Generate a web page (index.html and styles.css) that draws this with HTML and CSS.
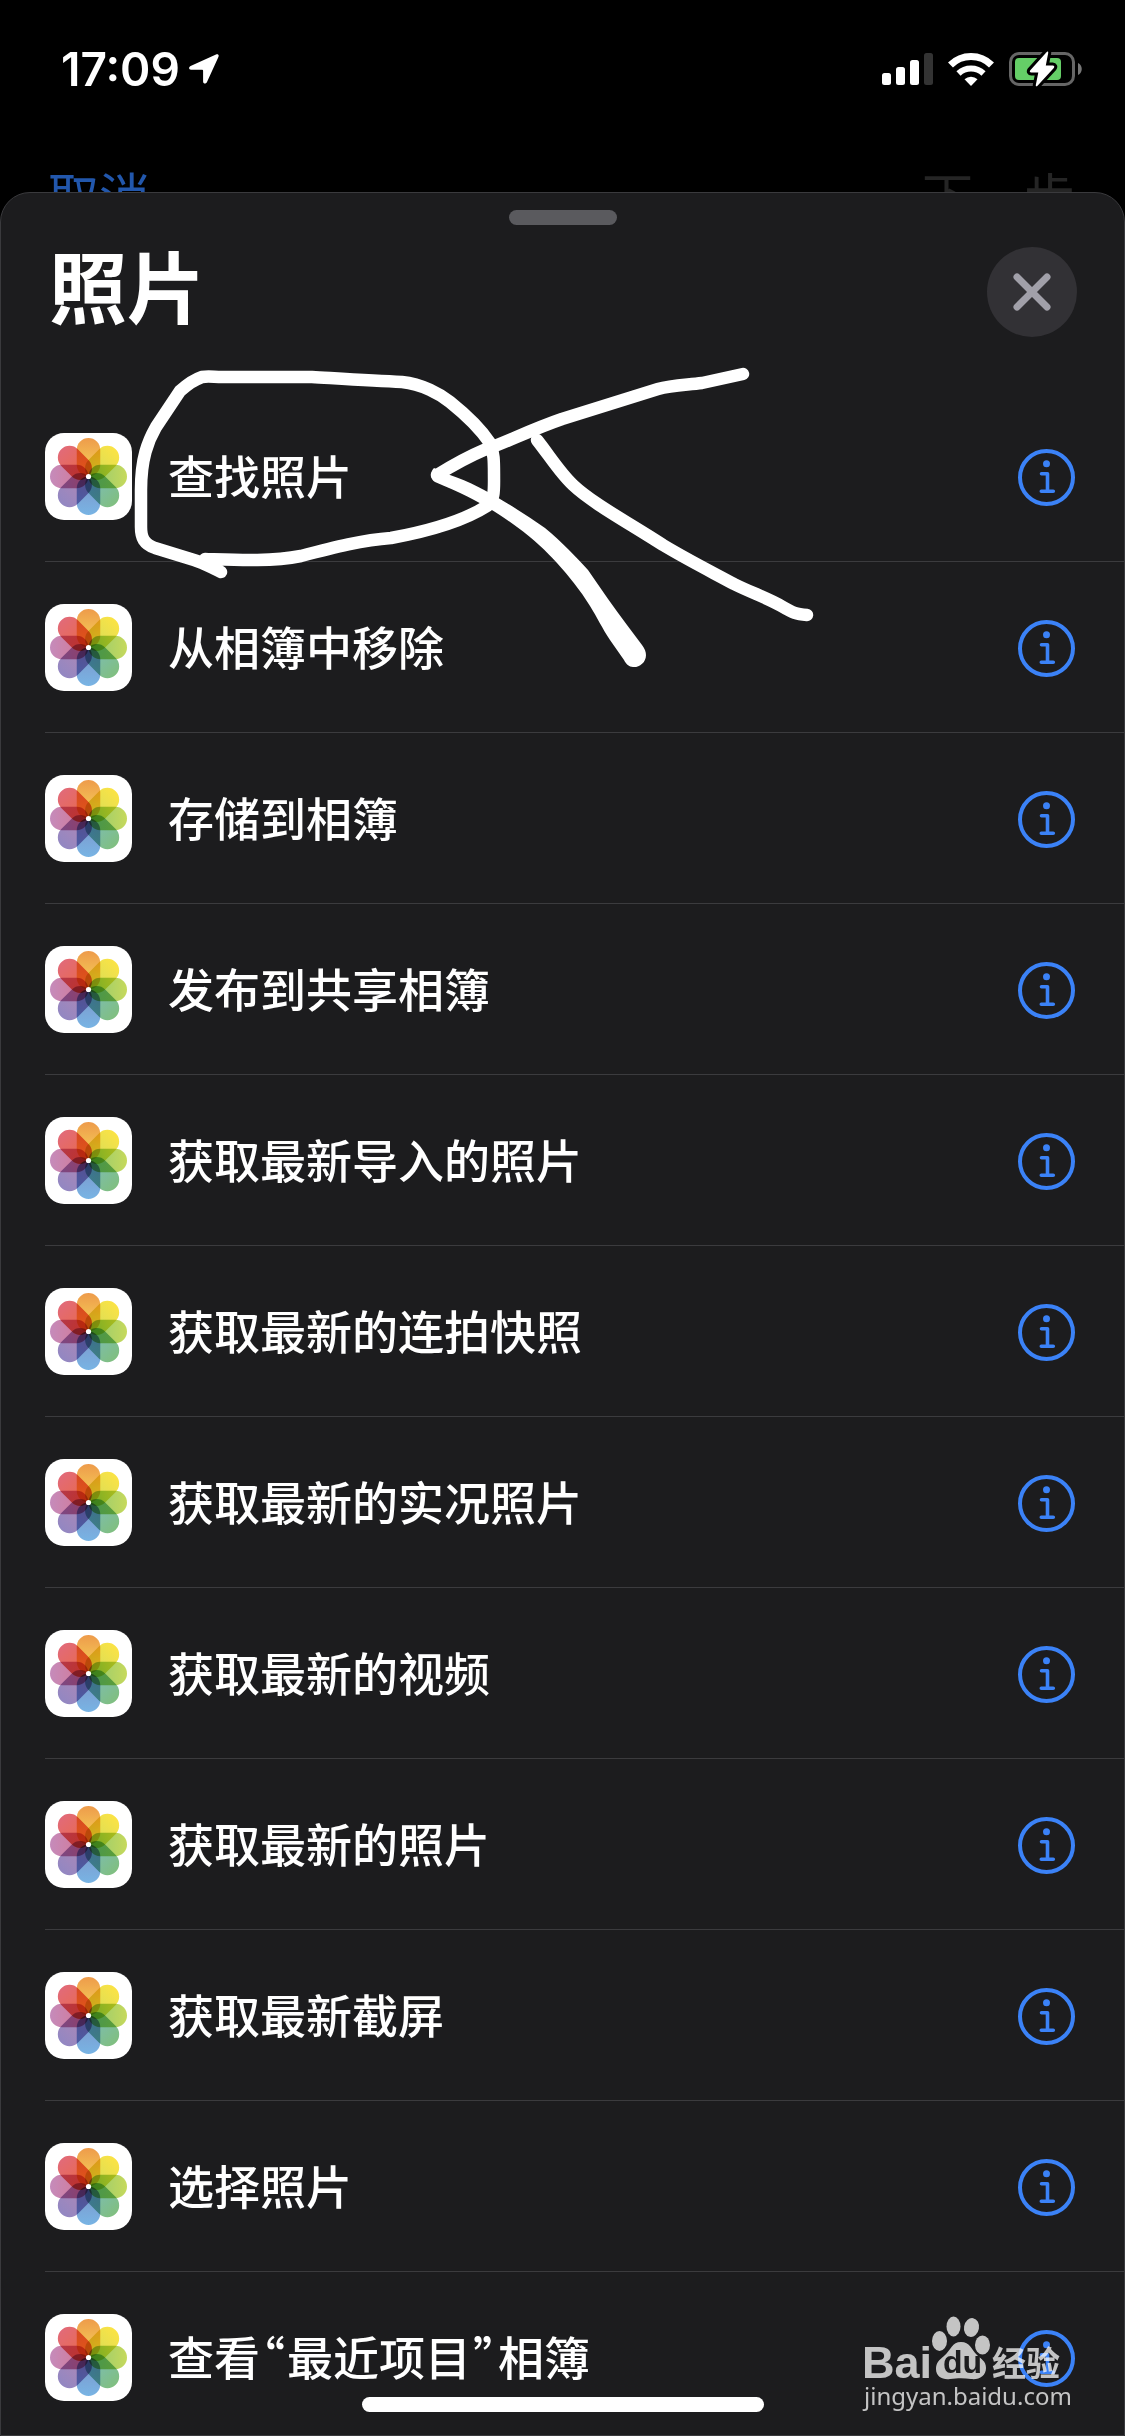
FILE: index.html
```html
<!DOCTYPE html>
<html lang="zh-CN">
<head>
    <meta charset="UTF-8">
    <meta name="viewport" content="width=device-width, initial-scale=1">
    <title>照片</title>
    <link rel="stylesheet" href="styles.css">
</head>

<body>
    <!-- shared icons -->
    <svg class="defs" aria-hidden="true">
        <defs>
            <linearGradient id="g1" x1="0" y1="0" x2="0" y2="1"><stop offset="0" stop-color="#ee9b4b"/><stop offset="1" stop-color="#f6d95a"/></linearGradient>
            <linearGradient id="g2" x1="0" y1="0" x2="0" y2="1"><stop offset="0" stop-color="#fbe345"/><stop offset="1" stop-color="#cfdc5c"/></linearGradient>
            <linearGradient id="g3" x1="0" y1="0" x2="0" y2="1"><stop offset="0" stop-color="#c6d95c"/><stop offset="1" stop-color="#8fc872"/></linearGradient>
            <linearGradient id="g4" x1="0" y1="0" x2="0" y2="1"><stop offset="0" stop-color="#80bf80"/><stop offset="1" stop-color="#7cbcc0"/></linearGradient>
            <linearGradient id="g5" x1="0" y1="0" x2="0" y2="1"><stop offset="0" stop-color="#78b4e4"/><stop offset="1" stop-color="#7f93c8"/></linearGradient>
            <linearGradient id="g6" x1="0" y1="0" x2="0" y2="1"><stop offset="0" stop-color="#9287c2"/><stop offset="1" stop-color="#b488b4"/></linearGradient>
            <linearGradient id="g7" x1="0" y1="0" x2="0" y2="1"><stop offset="0" stop-color="#c58bbb"/><stop offset="1" stop-color="#d67690"/></linearGradient>
            <linearGradient id="g8" x1="0" y1="0" x2="0" y2="1"><stop offset="0" stop-color="#e26a78"/><stop offset="1" stop-color="#ea6a44"/></linearGradient>
        </defs>
        <symbol id="photos" viewBox="0 0 87 87">
            <rect width="87" height="87" rx="19" fill="#fff"/>
            <g class="petals">
                <rect x="31.75" y="5" width="23.5" height="38.5" rx="11.75" fill="url(#g1)"/>
                <rect x="31.75" y="5" width="23.5" height="38.5" rx="11.75" fill="url(#g2)" transform="rotate(45 43.5 43.5)"/>
                <rect x="31.75" y="5" width="23.5" height="38.5" rx="11.75" fill="url(#g3)" transform="rotate(90 43.5 43.5)"/>
                <rect x="31.75" y="5" width="23.5" height="38.5" rx="11.75" fill="url(#g4)" transform="rotate(135 43.5 43.5)"/>
                <rect x="31.75" y="5" width="23.5" height="38.5" rx="11.75" fill="url(#g5)" transform="rotate(180 43.5 43.5)"/>
                <rect x="31.75" y="5" width="23.5" height="38.5" rx="11.75" fill="url(#g6)" transform="rotate(225 43.5 43.5)"/>
                <rect x="31.75" y="5" width="23.5" height="38.5" rx="11.75" fill="url(#g7)" transform="rotate(270 43.5 43.5)"/>
                <rect x="31.75" y="5" width="23.5" height="38.5" rx="11.75" fill="url(#g8)" transform="rotate(315 43.5 43.5)"/>
            </g>
            <circle cx="43.5" cy="43.5" r="2.6" fill="#fff"/>
        </symbol>
        <symbol id="info" viewBox="0 0 57 57">
            <circle cx="28.5" cy="28.5" r="26.5" fill="none" stroke="#3b82f7" stroke-width="4"/>
            <circle cx="28.5" cy="14.7" r="3.5" fill="#3b82f7"/>
            <path d="M23.5 24.7h6v17.6M23.3 42.3h12" fill="none" stroke="#3b82f7" stroke-width="3.6" stroke-linecap="round" stroke-linejoin="round"/>
        </symbol>
    </svg>

    <div class="status">
        <div class="clock">
            <span>17:09</span>
            <svg width="30" height="30" viewBox="0 0 30 30"><path d="M27 .6 1.6 12C-.6 13-.3 15.8 2 15.8H13.2c.6 0 .9.3.9.9V27.400c0 2.600 2.900 2.900 3.900.7L29.400 3C30.300 1 28.900-.2 27 .6z" fill="#fff"/></svg>
        </div>
        <div class="signals">
            <svg width="51" height="32" viewBox="0 0 51 32"><g fill="#fff"><rect y="20" width="9" height="12" rx="2.5"/><rect x="14" y="14" width="9" height="18" rx="2.5"/><rect x="28" y="7" width="9" height="25" rx="2.5"/></g><rect x="42" width="9" height="32" rx="2.5" fill="#333"/></svg>
            <svg width="46" height="33" viewBox="0 0 46 33"><g fill="none" stroke="#fff"><path d="M2.5 12a29 29 0 0 1 41 0" stroke-width="7"/><path d="M10.500 20.500a18 18 0 0 1 25 0" stroke-width="6"/></g><path d="M16.500 26.300a9.500 9.500 0 0 1 13 0L23 33z" fill="#fff"/></svg>
            <svg width="73" height="36" viewBox="0 0 73 36">
                <rect x="1.5" y="2.5" width="63" height="31" rx="8.5" fill="none" stroke="#666" stroke-width="3"/>
                <rect x="6" y="7" width="46" height="22" rx="4" fill="#65ce67"/>
                <path d="M69 12c5 2 5 10 0 12z" fill="#777"/>
                <path d="M37.5 1.2 21.3 19.2c-1 1.3-.3 2.3 1 2.3h7L26.8 34c-.2 1.6.8 1.7 1.700.7L44.800 17c1-1.300.3-2.500-1-2.500h-7L39.200 2c.2-1.500-.8-1.800-1.700-.8z" fill="#fff" stroke="#000" stroke-width="6" paint-order="stroke"/>
            </svg>
        </div>
    </div>

    <div class="nav">
        <a href="#" class="cancel">取消</a>
        <span>下一步</span>
    </div>

    <div class="sheet">
        <div class="grabber"></div>
        <div class="head">
            <h1>照片</h1>
            <button class="close" aria-label="关闭"><svg width="38" height="38" viewBox="0 0 38 38"><path d="M4 4l30 30M34 4 4 34" stroke="#a1a0a9" stroke-width="7" stroke-linecap="round"/></svg></button>
        </div>
        <ul class="list">
            <li><svg class="app"><use href="#photos"/></svg><span class="name">查找照片</span><button class="info" aria-label="信息"><svg><use href="#info"/></svg></button></li>
            <li><svg class="app"><use href="#photos"/></svg><span class="name">从相簿中移除</span><button class="info" aria-label="信息"><svg><use href="#info"/></svg></button></li>
            <li><svg class="app"><use href="#photos"/></svg><span class="name">存储到相簿</span><button class="info" aria-label="信息"><svg><use href="#info"/></svg></button></li>
            <li><svg class="app"><use href="#photos"/></svg><span class="name">发布到共享相簿</span><button class="info" aria-label="信息"><svg><use href="#info"/></svg></button></li>
            <li><svg class="app"><use href="#photos"/></svg><span class="name">获取最新导入的照片</span><button class="info" aria-label="信息"><svg><use href="#info"/></svg></button></li>
            <li><svg class="app"><use href="#photos"/></svg><span class="name">获取最新的连拍快照</span><button class="info" aria-label="信息"><svg><use href="#info"/></svg></button></li>
            <li><svg class="app"><use href="#photos"/></svg><span class="name">获取最新的实况照片</span><button class="info" aria-label="信息"><svg><use href="#info"/></svg></button></li>
            <li><svg class="app"><use href="#photos"/></svg><span class="name">获取最新的视频</span><button class="info" aria-label="信息"><svg><use href="#info"/></svg></button></li>
            <li><svg class="app"><use href="#photos"/></svg><span class="name">获取最新的照片</span><button class="info" aria-label="信息"><svg><use href="#info"/></svg></button></li>
            <li><svg class="app"><use href="#photos"/></svg><span class="name">获取最新截屏</span><button class="info" aria-label="信息"><svg><use href="#info"/></svg></button></li>
            <li><svg class="app"><use href="#photos"/></svg><span class="name">选择照片</span><button class="info" aria-label="信息"><svg><use href="#info"/></svg></button></li>
            <li><svg class="app"><use href="#photos"/></svg><span class="name">查看<span class="quote">“</span>最近项目<span class="quote">”</span>相簿</span><button class="info" aria-label="信息"><svg><use href="#info"/></svg></button></li>
        </ul>
    </div>

    <!-- pen marks over the first rows -->
    <svg class="marks" width="700" height="310" viewBox="130 365 700 310" aria-hidden="true">
        <g fill="none" stroke="#fff" stroke-width="12.5" stroke-linecap="round" stroke-linejoin="round">
            <path d="M221 572C212 568 204 563 194 560L155 548C144 544 141 538 141 527V490C141 458 148 441 156 427L180 391C189 383 196 379 202 377C208 376 214 377 222 377H312C345 379 375 381 402 382C422 384 440 394 450 402C470 418 482 431 490 443C494 452 494 462 494 474C494 490 495 499 487 506C465 520 435 530 391 538C363 540 335 547 301 556C270 562 235 560 205 559"/>
            <path d="M743 374 702 383C685 385 671 385 658 389L562 419C530 430 505 443 484 450C465 458 450 467 437 475"/>
            <path d="M537 440C549 455 560 473 573 485C592 503 629 523 663 545C688 560 710 571 734 584C752 593 770 599 783 607C793 613 796 614 807 615"/>
        </g>
        <path d="M434 468 450 475C478 484 513 506 545 528C563 543 576 557 588 570C602 590 614 608 627 625L642 645C652 658 641 668 633 667C629 667 626 664 624 660L610 640C602 628 597 617 590 606C580 590 569 576 557 563C546 551 535 540 517 527C497 512 474 498 435 482C430 479 430 472 434 468z" fill="#fff"/>
    </svg>

    <svg class="watermark" width="202" height="100" viewBox="862 2312 202 100">
        <g fill="#fff">
            <text x="862" y="2378" class="bai">Bai</text>
            <ellipse cx="939.5" cy="2341" rx="7.5" ry="10"/>
            <ellipse cx="953.5" cy="2326.5" rx="7" ry="10"/>
            <ellipse cx="971.5" cy="2327.5" rx="7.5" ry="9.5" transform="rotate(10 971.5 2327.5)"/>
            <ellipse cx="982.5" cy="2345" rx="7.5" ry="9.5"/>
            <path d="M961 2342c-9 0-10 8-17 14-5 4-8 7-8 13 0 8 7 11 14 10 8-1 14-1 21 0 8 1 15-3 15-11 0-7-5-9-9-13-6-6-7-13-16-13z"/>
            <text x="992" y="2376" class="jy">经验</text>
            <text x="864" y="2405" class="url">jingyan.baidu.com</text>
        </g>
        <text x="943" y="2373" class="du">du</text>
    </svg>

    <div class="home"></div>
</body>
</html>
```
FILE: styles.css
```css
* {
    box-sizing: border-box;
}

body {
    margin: 0;
    height: 100vh;
    overflow: hidden;
    position: relative;
    display: flex;
    flex-direction: column;
    background: #000;
    color: #fff;
    font-family: Inter, "Noto Sans CJK SC", sans-serif;
}

button {
    border: none;
    padding: 0;
    background: none;
    cursor: pointer;
}

svg {
    display: block;
}

.defs {
    position: absolute;
    width: 0;
    height: 0;
}

.petals {
    isolation: isolate;
}

.petals rect {
    mix-blend-mode: multiply;
}

/* status bar */
.status {
    flex: none;
    height: 138px;
    padding: 0 43px 0 61px;
    display: flex;
    justify-content: space-between;
    align-items: center;
}

.clock {
    display: flex;
    align-items: center;
    gap: 9px;
    font-size: 46px;
    font-weight: 600;
}

.signals {
    display: flex;
    align-items: center;
    gap: 15px;
}

/* page behind the sheet */
.nav {
    flex: none;
    height: 54px;
    padding: 24px 50px 0 48px;
    overflow: hidden;
    display: flex;
    justify-content: space-between;
    font-size: 51px;
    line-height: 72px;
    color: #252525;
}

.cancel {
    color: #2257ac;
    text-decoration: none;
}

.sheet {
    flex: 1;
    min-height: 0;
    overflow: hidden;
    background: #1c1c1e;
    border: 1px solid #3a3a3d;
    border-radius: 30px 30px 0 0;
}

.grabber {
    width: 108px;
    height: 15px;
    margin: 17px auto 0;
    border-radius: 8px;
    background: #5a5a5e;
}

.head {
    display: flex;
    justify-content: space-between;
    align-items: center;
    height: 166px;
    padding: 0 47px 32px 48px;
}

h1 {
    margin: 0;
    padding-bottom: 4px;
    font-size: 78px;
    line-height: 100px;
    font-weight: 700;
}

.close {
    width: 90px;
    height: 90px;
    border-radius: 50%;
    background: #323135;
    display: flex;
    justify-content: center;
    align-items: center;
}

.list {
    list-style: none;
    margin: 0 0 0 44px;
    padding: 0;
}

.list li {
    display: flex;
    align-items: center;
    height: 171px;
    padding-right: 49px;
    border-bottom: 1px solid #3b3b3e;
    font-size: 46px;
    font-weight: 500;
}

.app {
    width: 87px;
    height: 87px;
    margin-right: 36px;
}

.name {
    padding-bottom: 5px;
}

.quote {
    padding: 0 2px;
    font-family: "Noto Sans CJK SC", sans-serif;
    font-feature-settings: "halt";
}

.info {
    margin-left: auto;
    padding-top: 2px;
}

.info svg {
    width: 57px;
    height: 57px;
}

/* overlays */
.marks {
    position: absolute;
    left: 130px;
    top: 365px;
}

.watermark {
    position: absolute;
    right: 61px;
    bottom: 24px;
    opacity: 0.74;
    overflow: visible;
}

.bai {
    font: 700 45px "Liberation Sans", sans-serif;
}

.du {
    font: 700 32px "Liberation Sans", sans-serif;
    fill: #1c1c1e;
}

.jy {
    font: 700 34px "Noto Sans CJK SC", sans-serif;
}

.url {
    font: 24px "Noto Sans", sans-serif;
}

.home {
    position: absolute;
    left: 50%;
    bottom: 24px;
    width: 402px;
    height: 15px;
    margin-left: -201px;
    border-radius: 8px;
    background: #fff;
}
```
